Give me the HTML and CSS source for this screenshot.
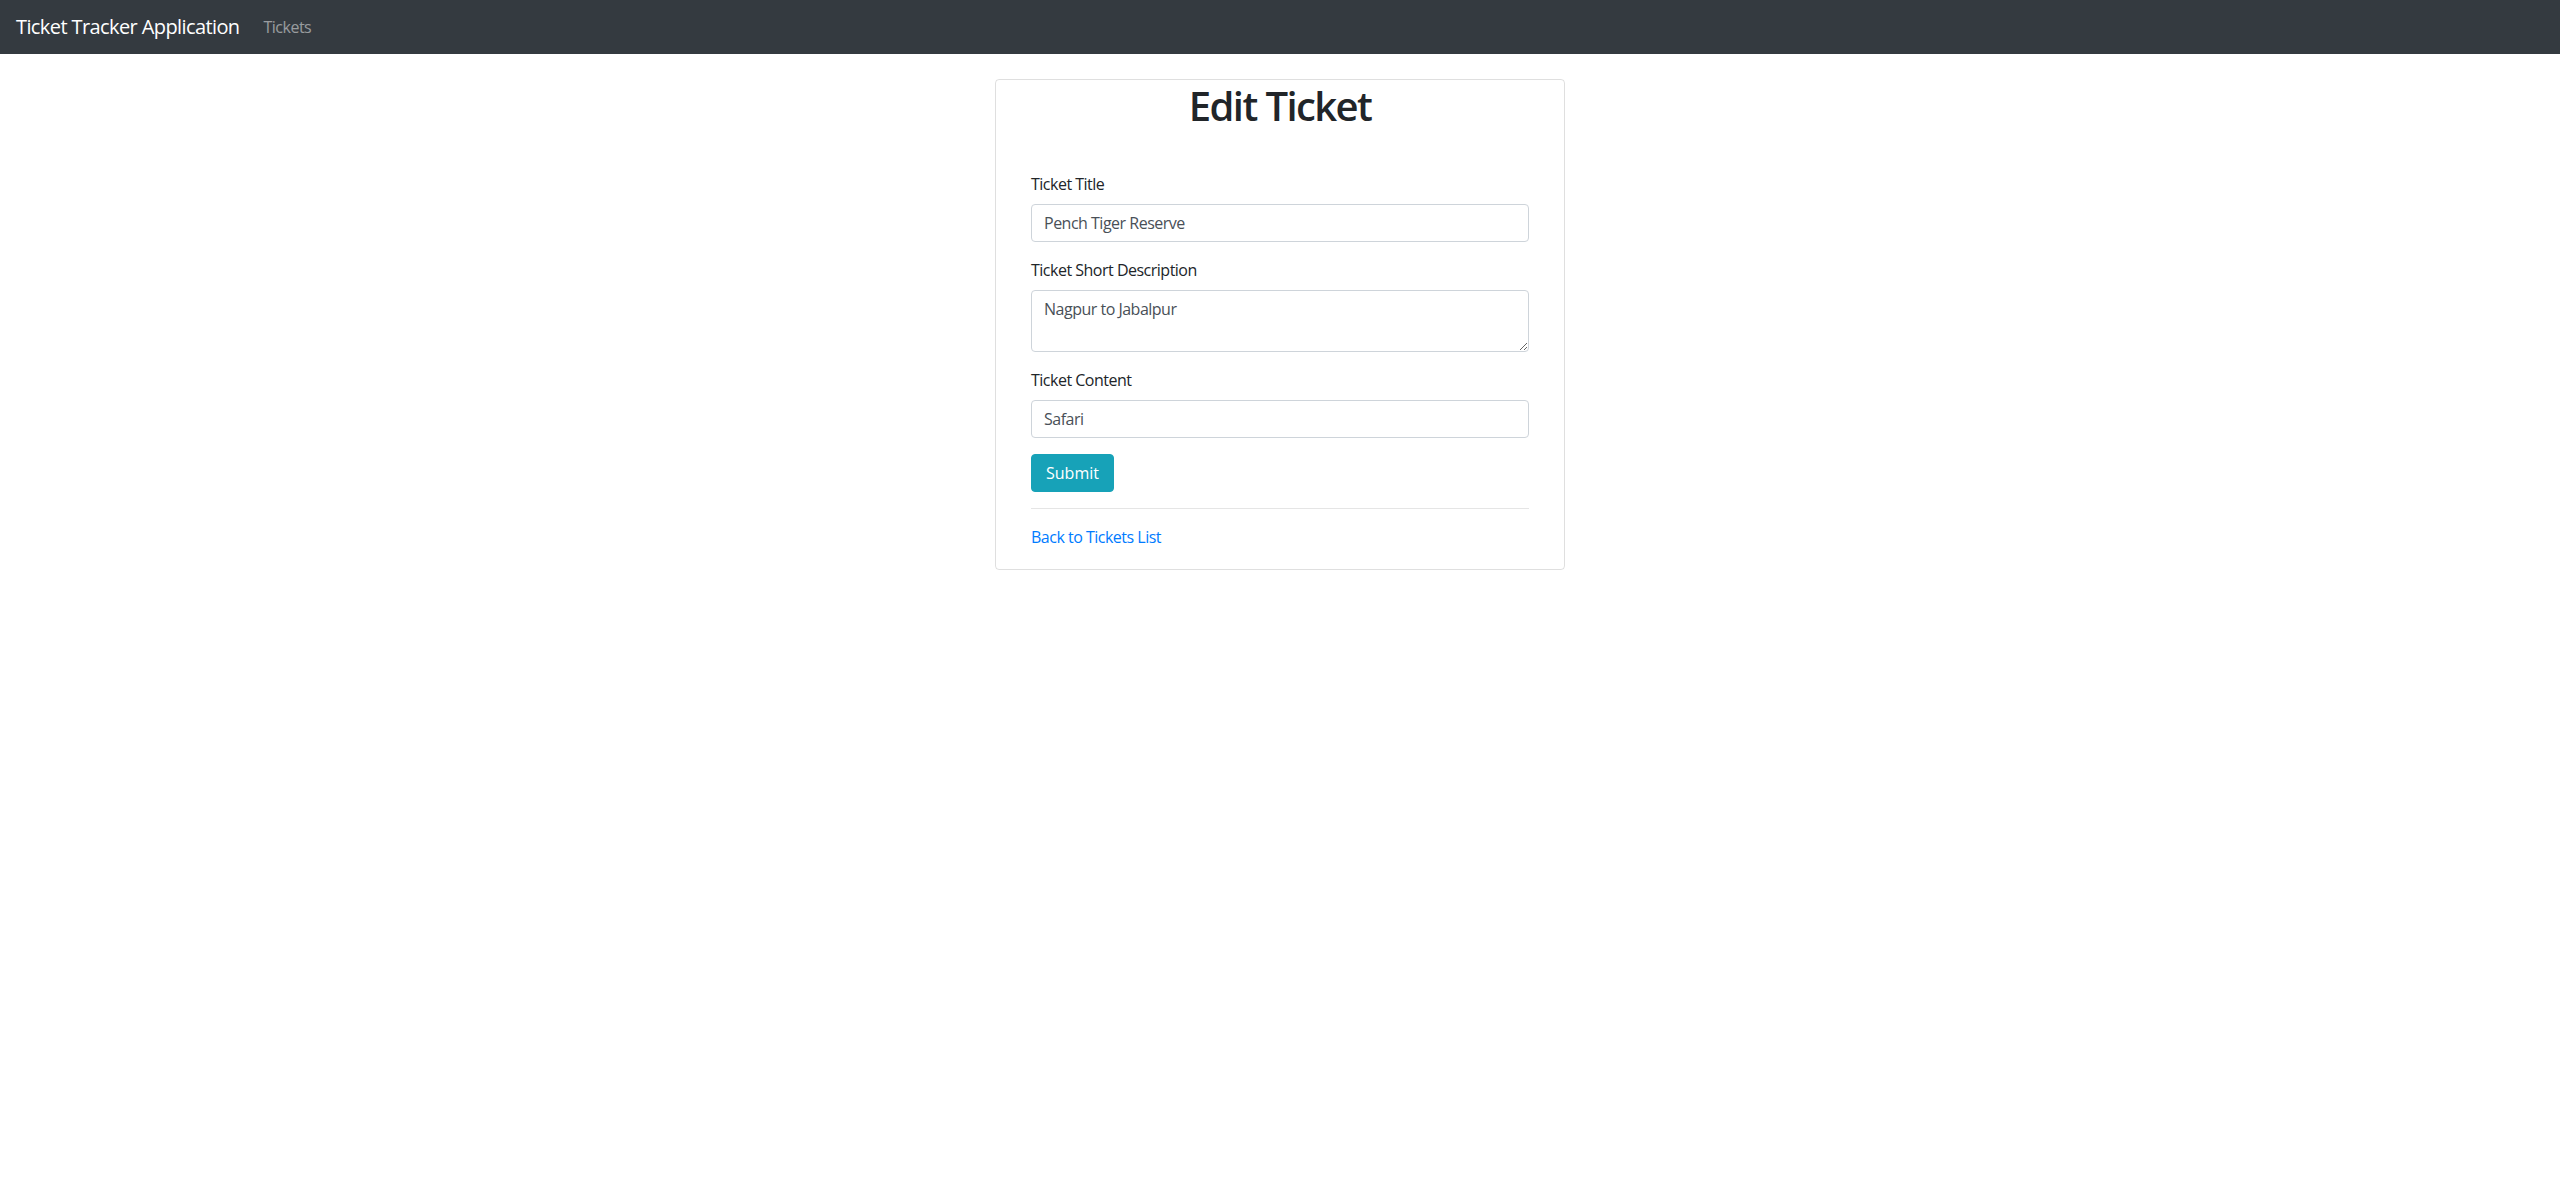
FILE: index.html
```html
<!DOCTYPE html>
<html lang="en">
<head>
<meta charset="utf-8">
<title>Edit Ticket</title>
<link rel="stylesheet" href="styles.css">
</head>
<body>
<nav class="navbar">
  <a class="brand" href="#">Ticket Tracker Application</a>
  <a class="nav-link" href="#">Tickets</a>
</nav>
<main class="page">
  <div class="card">
    <h1 class="title">Edit Ticket</h1>
    <form class="form">
      <div class="form-group">
        <label class="label" for="title">Ticket Title</label>
        <input class="control" id="title" type="text" value="Pench Tiger Reserve">
      </div>
      <div class="form-group">
        <label class="label" for="desc">Ticket Short Description</label>
        <textarea class="control textarea" id="desc" rows="2">Nagpur to Jabalpur</textarea>
      </div>
      <div class="form-group">
        <label class="label" for="content">Ticket Content</label>
        <input class="control" id="content" type="text" value="Safari">
      </div>
      <button class="btn" type="button">Submit</button>
    </form>
    <hr class="divider">
    <a class="back-link" href="#">Back to Tickets List</a>
  </div>
</main>
</body>
</html>
```
FILE: styles.css
```css
* { box-sizing: border-box; }
html, body {
  margin: 0;
  padding: 0;
  background: #fff;
}
body {
  font-family: "Open Sans", "Noto Sans", "Liberation Sans", sans-serif;
  font-size: 16px;
  line-height: 24px;
  color: #212529;
}
.navbar {
  height: 54px;
  background: #343a40;
  display: flex;
  align-items: center;
  padding: 0 16px;
}
.brand {
  color: #fff;
  font-size: 20px;
  line-height: 30px;
  text-decoration: none;
  margin-right: 16px;
  letter-spacing: -0.6px;
}
.nav-link {
  color: rgba(255,255,255,.5);
  text-decoration: none;
  padding: 0 8px;
  font-size: 16px;
  letter-spacing: -0.5px;
}
.page {
  display: flex;
  justify-content: center;
  padding-top: 25px;
}
.card {
  width: 570px;
  border: 1px solid rgba(0,0,0,.125);
  border-radius: 4px;
  padding: 2px 35px 20px;
}
.title {
  margin: 0 0 42px;
  text-align: center;
  font-size: 40px;
  line-height: 48px;
  font-weight: 600;
  letter-spacing: -1.6px;
}
.form { margin: 0; }
.form-group {
  margin-bottom: 16px;
}
.label {
  display: block;
  margin-bottom: 8px;
  letter-spacing: -0.5px;
}
.control {
  display: block;
  width: 100%;
  height: 38px;
  padding: 6px 12px;
  font-family: inherit;
  font-size: 16px;
  line-height: 24px;
  color: #495057;
  background: #fff;
  border: 1px solid #ced4da;
  border-radius: 4px;
  letter-spacing: -0.5px;
  margin: 0;
}
.textarea {
  height: 62px;
  resize: vertical;
}
.btn {
  display: inline-block;
  height: 38px;
  padding: 6px 14px;
  font-family: inherit;
  font-size: 16px;
  line-height: 24px;
  color: #fff;
  background: #17a2b8;
  border: 1px solid #17a2b8;
  border-radius: 4px;
  letter-spacing: 0;
  margin: 0;
}
.divider {
  margin: 16px 0;
  border: 0;
  border-top: 1px solid rgba(0,0,0,.1);
  height: 0;
}
.back-link {
  display: block;
  color: #007bff;
  text-decoration: none;
  letter-spacing: -0.5px;
}
```
